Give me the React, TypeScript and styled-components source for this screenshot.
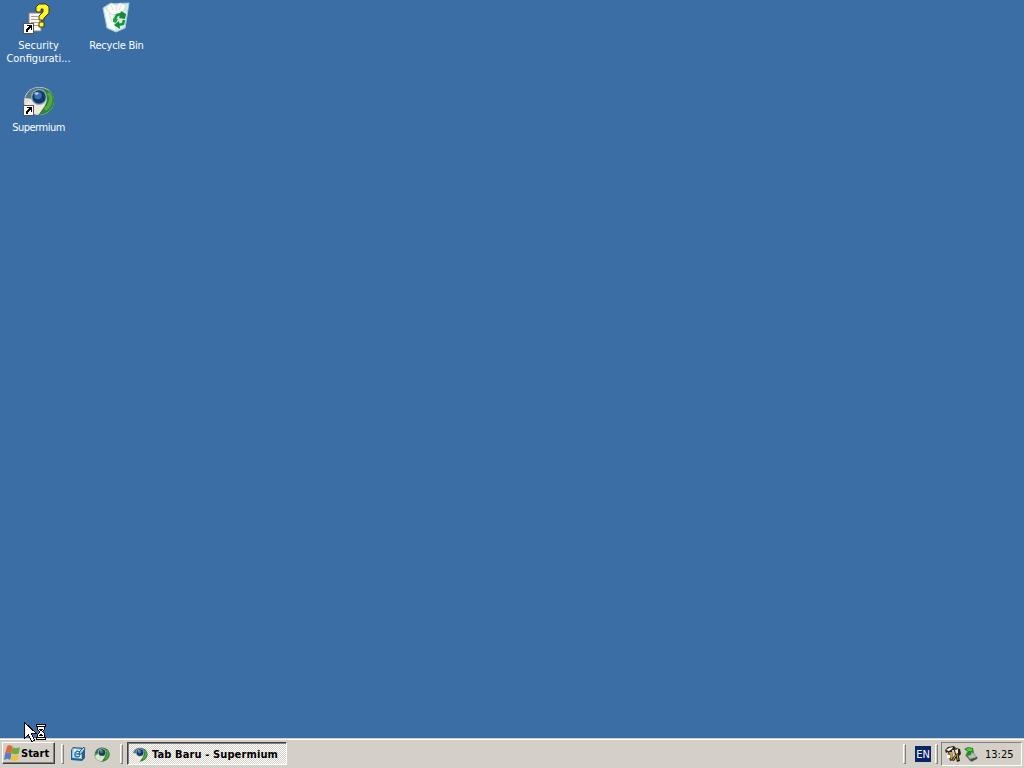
import React from "react";
import styled, { createGlobalStyle } from "styled-components";

const GlobalStyle = createGlobalStyle`
  * { box-sizing: border-box; }
  body { margin: 0; overflow: hidden; }
  svg { display: block; flex: none; }
`;

const Screen = styled.div`
  position: relative;
  display: flex;
  flex-direction: column;
  width: 1024px;
  height: 768px;
  background: #3a6ea5;
  color: #000;
  font: 11px/13px Tahoma, "DejaVu Sans Condensed", "DejaVu Sans", sans-serif;
  font-stretch: condensed;
  cursor: default;
`;

const Desktop = styled.main`
  flex: 1;
  display: flex;
  align-items: flex-start;
  padding-left: 1px;
`;

const IconColumn = styled.div`
  display: flex;
  flex-direction: column;
  width: 75px;
  margin-right: 3px;
`;

const Shortcut = styled.div`
  display: flex;
  flex-direction: column;
  align-items: center;
  height: 82px;
  padding-top: 2px;
`;

const ShortcutLabel = styled.span<{ $spacing?: number }>`
  margin-top: 5px;
  color: #fff;
  text-align: center;
  white-space: pre;
  letter-spacing: ${(p) => p.$spacing ?? 0}px;
`;

const Taskbar = styled.footer`
  display: flex;
  align-items: flex-start;
  height: 30px;
  padding: 4px 2px 0;
  background: #d4d0c8;
  border-top: 1px solid #d4d0c8;
  box-shadow: inset 0 1px #fff;
`;

const StartButton = styled.button`
  display: flex;
  align-items: center;
  width: 53px;
  height: 22px;
  margin-top: -1px;
  padding: 0 0 0 1px;
  color: #000;
  font: inherit;
  font-weight: bold;
  background: #d4d0c8;
  border: 1px solid;
  border-color: #fff #404040 #404040 #fff;
  box-shadow: inset -1px -1px #808080;
`;

const Grip = styled.div<{ $before: number; $after: number }>`
  width: 3px;
  height: 20px;
  margin: 1px ${(p) => p.$after}px 0 ${(p) => p.$before}px;
  background: #d4d0c8;
  border: 1px solid;
  border-color: #fff #808080 #808080 #fff;
`;

const QuickLaunch = styled.div`
  display: flex;
  gap: 8px;
  padding-top: 3px;
`;

const TaskButton = styled.button`
  display: flex;
  align-items: center;
  gap: 4px;
  width: 160px;
  height: 23px;
  margin-top: -1px;
  padding: 1px 0 0 4px;
  color: #000;
  font: inherit;
  font-weight: bold;
  letter-spacing: 0.12px;
  white-space: nowrap;
  background: repeating-conic-gradient(#fff 0 25%, #d4d0c8 0 50%) 0 0 / 2px 2px;
  border: 1px solid;
  border-color: #404040 #fff #fff #404040;
  box-shadow: inset 1px 1px #808080;
`;

const TraySection = styled.div`
  display: flex;
  margin-left: auto;
`;

const Language = styled.div`
  width: 16px;
  height: 16px;
  margin-top: 3px;
  color: #fff;
  line-height: 17px;
  text-align: center;
  background: #0a246a;
`;

const Tray = styled.div`
  display: flex;
  align-items: center;
  gap: 2px;
  width: 81px;
  height: 24px;
  margin-top: -1px;
  padding-left: 3px;
  border: 1px solid;
  border-color: #808080 #fff #fff #808080;
`;

const Clock = styled.time`
  margin-left: 4px;
`;

const Pointer = styled.svg`
  position: absolute;
  left: 24px;
  top: 721px;
`;

function ShortcutArrow() {
  return (
    <g shapeRendering="crispEdges">
      <path d="M0 21h11v11H0z" fill="#fff" />
      <path d="M.5 21.5h10v10H.5z" fill="none" stroke="#555" />
      <path d="M4 23h5v5H8v-2H7v1H6v1H5v2H3v-3h1v-1h1v-1h1v-1H4z" fill="#000" />
    </g>
  );
}

function SecurityIcon() {
  return (
    <svg width="32" height="32" viewBox="0 0 32 32">
      <path d="M6 11h12v18H6z" fill="#f8f7f0" stroke="#8c8a86" />
      <path d="M8 14.5h7M8 17.5h7M8 20.5h7M8 23.5h8" stroke="#b19a94" />
      <path d="M13 9V5l3-3h7l3 3v6l-5 5v2h-5v-4l4-4V7h-2v3h-4z" fill="#fff52c" stroke="#3c3c08" />
      <path d="M16 20h5v5h-5z" fill="#fff52c" stroke="#3c3c08" />
      <ShortcutArrow />
    </svg>
  );
}

function RecycleIcon() {
  return (
    <svg width="32" height="32" viewBox="0 0 32 32">
      <path d="m2 6 6-4 20-1-4 25-9 4-9-4z" fill="#d9eeee" stroke="#a0cddd" />
      <path d="m3 7 9 4 3 18-8-4z" fill="#f3faf9" />
      <path d="m12 11 15-8-4 22-8 4z" fill="#d3e9ea" />
      <path d="m5 6 5-5 5 2 4-2 6 2-2 6-7 4-6-1z" fill="#fbfbf6" stroke="#c6cfca" strokeWidth=".7" />
      <path d="m10 3 2 5m4-5-1 6m5-6-2 5M8 11l3 9" stroke="#d5ddd6" strokeWidth=".8" fill="none" />
      <path d="m14 17 2-4 5-1M23 18l-1 4-5 1" fill="none" stroke="#169536" strokeWidth="2.6" />
      <path d="m20 9 5 3-1 5-6-1z" fill="#148b34" />
      <path d="m18 19-5 4 6 4z" fill="#148b34" />
      <path d="m12 16 5 1-2 4-3-1z" fill="#25a344" />
    </svg>
  );
}

function BrowserIcon({ size = 32, shortcut = false, green = false }: { size?: number; shortcut?: boolean; green?: boolean }) {
  return (
    <svg width={size} height={size} viewBox="0 0 32 32">
      <path d="M1 18C1 9 8 3 16 3c9 0 15 6 15 14 0 8-7 14-15 14S1 26 1 18z" fill={green ? "#608b68" : "#e6e0cf"} />
      <path d="M2 14C5 6 11 2 20 4l6 6-7 6z" fill={green ? "#356d68" : "#54798a"} />
      <path d="M20 4c8 2 12 8 11 14-1 8-8 13-16 13l6-8c4-6 4-12-1-19z" fill="#2c8435" />
      <path d="M25 9c5 4 3 12-3 17" stroke="#58a747" strokeWidth="3.5" fill="none" />
      <path d="m2 20 7-5 13 6-6 9C8 30 3 26 2 20z" fill={green ? "#d9e5cf" : "#f0e9dd"} />
      <circle cx="16" cy="13" r="8" fill={green ? "#b5cac6" : "#86a8bd"} />
      <circle cx="16" cy="13" r="6.7" fill={green ? "#153f47" : "#153866"} />
      <circle cx="15" cy="11.5" r="3.7" fill={green ? "#2d746f" : "#3973ad"} />
      <ellipse cx="13.5" cy="9.5" rx="2.2" ry="1.2" fill="#a9cde0" />
      {shortcut && <ShortcutArrow />}
    </svg>
  );
}

function WindowsIcon() {
  return (
    <svg width="17" height="17" viewBox="0 0 16 16">
      <path d="m3 1 2-1 3 1-1 7-3-1-3 1z" fill="#df6738" />
      <path d="m8 2 3 1 4-1-1 6-3 1-4-1z" fill="#70aa43" />
      <path d="m1 8 3-1 3 1-1 6-3-1-3 1z" fill="#527fc9" />
      <path d="m7 9 3 1 4-1-1 5-3 1-4-1z" fill="#edc33d" />
    </svg>
  );
}

function ShowDesktopIcon() {
  return (
    <svg width="16" height="16" viewBox="0 0 16 16">
      <path d="m3 1 12 1v10l-3 3-11-1V4z" fill="#245f8d" />
      <path d="m3 2 9 1v10l-10-1V4z" fill="#8fc1df" />
      <path d="m4 3 7 1v8l-8-1z" fill="#f1f8f8" />
      <path d="M10 6 7 5 5 7v3l2 1 3-1M6 8h4V6" fill="none" stroke="#2877b2" strokeWidth="1.5" />
      <path d="m10 5 4-4 1 2-4 5-2 1z" fill="#b6d8e8" stroke="#174b72" strokeWidth=".8" />
    </svg>
  );
}

function ToolsIcon() {
  return (
    <svg width="16" height="16" viewBox="0 0 16 16">
      <path d="m0 4 3-3 6-1 2 2-2 2H7l1 10-3 1-2-9-2 1z" fill="#292621" />
      <path d="m1 4 3-2 4-1-1 2-3 2z" fill="#faf6e5" />
      <path d="M4 6h3l1 7-2 1z" fill="#c59b45" />
      <path d="m9 4 2-2 4 1 1 5-2 2 1 5-3 1-1-4-2 3-3-1 4-5z" fill="#20201b" />
      <path d="m10 4 3-1v4l-2 1z" fill="#fff0bd" />
      <path d="m12 8 1 6m-2-5-3 5" stroke="#d7a537" />
      <path d="M2 9h3v3H2z" fill="#fff" />
    </svg>
  );
}

function SafelyRemoveIcon() {
  return (
    <svg width="16" height="16" viewBox="0 0 16 16">
      <path d="m2 9 8-3 5 6-8 3z" fill="#667269" />
      <path d="m4 9 6-2 4 4-6 3z" fill="#b5beb0" />
      <path d="m7 13 7-2v2l-6 3z" fill="#48534b" />
      <path d="m1 3 4-2 5 1 1 5-3-1v3l-4 1-1-3 2-1z" fill="#248b26" />
      <path d="m3 3 3-1 3 1v2H5z" fill="#5dc640" />
    </svg>
  );
}

function BusyPointer() {
  return (
    <Pointer width="24" height="22" viewBox="0 0 24 22" shapeRendering="crispEdges">
      <path d="M.5 1.5v16l4-4 3 7 3-1-3-7h5z" fill="#fff" stroke="#000" />
      <path d="M12 3h10v3h-1v2l-2 3 2 2v3h1v3H12v-3h1v-3l2-2-2-3V6h-1z" fill="#000" />
      <path d="M13 4h8v1h-8zM13 17h8v1h-8zM14 6h6v2l-2 3 2 2v3h-6v-3l2-2-2-3z" fill="#fff" />
      <path d="M15 8h4v1h-1v1h-2V9h-1zM16 13h2v1h1v1h-4v-1h1z" fill="#000" />
    </Pointer>
  );
}

export default function App() {
  return (
    <Screen>
      <GlobalStyle />
      <Desktop>
        <IconColumn>
          <Shortcut>
            <SecurityIcon />
            <ShortcutLabel>{"Security\nConfigurati..."}</ShortcutLabel>
          </Shortcut>
          <Shortcut>
            <BrowserIcon shortcut />
            <ShortcutLabel $spacing={-0.5}>Supermium</ShortcutLabel>
          </Shortcut>
        </IconColumn>
        <IconColumn>
          <Shortcut>
            <RecycleIcon />
            <ShortcutLabel $spacing={-0.25}>Recycle Bin</ShortcutLabel>
          </Shortcut>
        </IconColumn>
      </Desktop>
      <Taskbar>
        <StartButton><WindowsIcon />Start</StartButton>
        <Grip $before={6} $after={6} />
        <QuickLaunch><ShowDesktopIcon /><BrowserIcon size={16} green /></QuickLaunch>
        <Grip $before={10} $after={4} />
        <TaskButton><BrowserIcon size={16} />Tab Baru - Supermium</TaskButton>
        <TraySection>
          <Grip $before={0} $after={9} />
          <Language>EN</Language>
          <Grip $before={4} $after={3} />
          <Tray><ToolsIcon /><SafelyRemoveIcon /><Clock>13:25</Clock></Tray>
        </TraySection>
      </Taskbar>
      <BusyPointer />
    </Screen>
  );
}
